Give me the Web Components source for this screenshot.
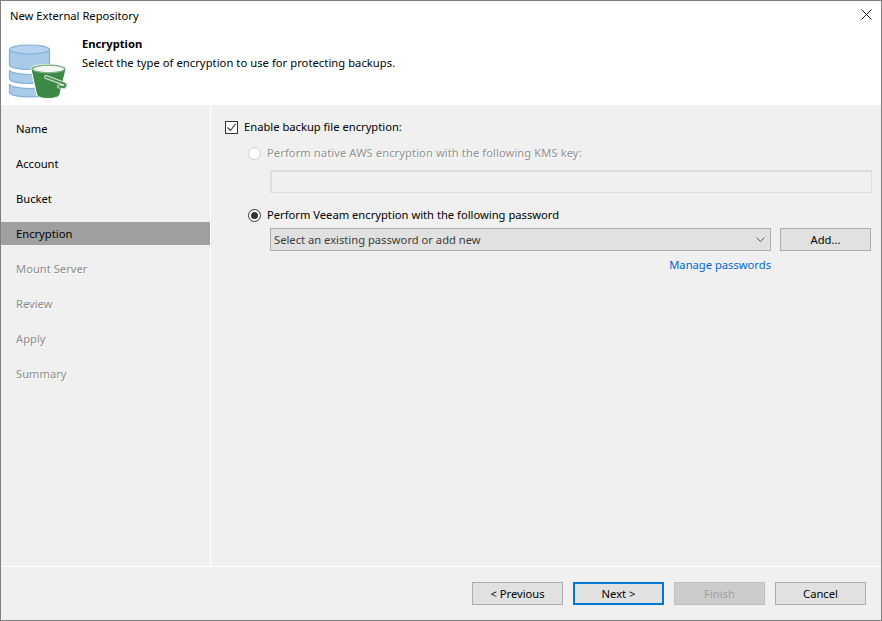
<!DOCTYPE html>
<html>
<head>
<meta charset="utf-8">
<title>New External Repository</title>
<style>
    html, body { margin: 0; padding: 0; }
    body { font: 11.2px "Noto Sans", "Open Sans", sans-serif; color: #000; }
</style>
</head>
<body>
<wizard-dialog>
    <span slot="title">New External Repository</span>
    <span slot="heading">Encryption</span>
    <span slot="subheading">Select the type of encryption to use for protecting backups.</span>

    <wizard-step slot="nav">Name</wizard-step>
    <wizard-step slot="nav">Account</wizard-step>
    <wizard-step slot="nav">Bucket</wizard-step>
    <wizard-step slot="nav" selected>Encryption</wizard-step>
    <wizard-step slot="nav" disabled>Mount Server</wizard-step>
    <wizard-step slot="nav" disabled>Review</wizard-step>
    <wizard-step slot="nav" disabled>Apply</wizard-step>
    <wizard-step slot="nav" disabled>Summary</wizard-step>

    <encryption-form></encryption-form>

    <wizard-button slot="footer">&lt; Previous</wizard-button>
    <wizard-button slot="footer" focused>Next &gt;</wizard-button>
    <wizard-button slot="footer" disabled>Finish</wizard-button>
    <wizard-button slot="footer">Cancel</wizard-button>
</wizard-dialog>

<script>
class WizardDialog extends HTMLElement {
    connectedCallback() {
        this.attachShadow({ mode: 'open' });
        this.shadowRoot.innerHTML = `
            <style>
                :host {
                    display: grid;
                    grid-template-rows: 104px 1fr 53px;
                    box-sizing: border-box;
                    width: 882px;
                    height: 621px;
                    border: 1px solid #7f7f7f;
                    background: #f0f0f0;
                }
                .top {
                    background: #fff;
                    display: grid;
                    grid-template-columns: 81px 1fr;
                    grid-template-rows: 35px 1fr;
                }
                .title {
                    grid-column: 1 / 3;
                    display: flex;
                    justify-content: space-between;
                    padding: 7px 9px 0 9px;
                    line-height: 16px;
                }
                .close { width: 11px; height: 11px; margin-top: 1px; }
                .icon { width: 62px; height: 56px; margin: 8px 0 0 7px; }
                .heading { font-weight: 700; line-height: 16px; }
                .sub { line-height: 16px; margin-top: 3px; letter-spacing: .05px; }
                .middle {
                    display: grid;
                    grid-template-columns: 210px 1fr;
                    border-bottom: 1px solid #fff;
                }
                nav {
                    display: flex;
                    flex-direction: column;
                    gap: 12px;
                    padding-top: 12px;
                    border-right: 1px solid #fff;
                }
                .footer {
                    display: flex;
                    justify-content: flex-end;
                    gap: 10px;
                    padding: 15px 15px 0 0;
                }
            </style>
            <div class="top">
                <div class="title">
                    <slot name="title"></slot>
                    <svg class="close" viewBox="0 0 11 11"><path d="M.5.5l10 10M10.5.5l-10 10" stroke="#1a1a1a" fill="none"/></svg>
                </div>
                <svg class="icon" viewBox="0 0 62 56">
                    <g stroke="#7fb0d8" stroke-width="1.200">
                        <path d="M1.500 40v8.500c0 2.500 9 4.500 20 4.500s20-2 20-4.500V40c0 2.500-9 4.500-20 4.500S1.500 42.500 1.500 40z" fill="#a9cbe9"/>
                        <path d="M1.500 26v9c0 2.500 9 4.500 20 4.500s20-2 20-4.500v-9c0 2.500-9 4.500-20 4.500S1.500 28.500 1.500 26z" fill="#a9cbe9"/>
                        <path d="M1.500 6v15c0 2.500 9 4.500 20 4.500s20-2 20-4.500V6z" fill="#a9cbe9"/>
                        <ellipse cx="21.500" cy="5.500" rx="20" ry="4.500" fill="#b5d3ee"/>
                    </g>
                    <path d="M23 25c0-3 7-4.500 17-4.500S58 22 58 25l-6 25c-.5 3-5 4.500-12 4.500S29 53 28.500 50z" fill="#3c8a45" stroke="#fff" stroke-width="1"/>
                    <ellipse cx="40.500" cy="25" rx="16" ry="3.800" fill="#f4f8f2" stroke="#7fb283" stroke-width="1.200"/>
                    <path d="M38 33l18 6.500c2.500 1 1.500 4-1 3.500l-4-.5" fill="none" stroke="#cfe2d0" stroke-width="4" stroke-linecap="round"/>
                    <path d="M38 33l18 6.500c2.500 1 1.500 4-1 3.500l-4-.5" fill="none" stroke="#3c8a45" stroke-width="1.800" stroke-linecap="round"/>
                </svg>
                <div>
                    <div class="heading"><slot name="heading"></slot></div>
                    <div class="sub"><slot name="subheading"></slot></div>
                </div>
            </div>
            <div class="middle">
                <nav><slot name="nav"></slot></nav>
                <div><slot></slot></div>
            </div>
            <div class="footer"><slot name="footer"></slot></div>
        `;
    }
}

class WizardStep extends HTMLElement {
    connectedCallback() {
        this.attachShadow({ mode: 'open' });
        this.shadowRoot.innerHTML = `
            <style>
                :host {
                    display: block;
                    height: 23px;
                    line-height: 23px;
                    padding-left: 15px;
                }
                :host([selected]) { background: #a0a0a0; }
                :host([disabled]) { color: #8c8c8c; text-shadow: 1px 1px 0 #fff; }
            </style>
            <slot></slot>
        `;
    }
}

class WizardButton extends HTMLElement {
    connectedCallback() {
        this.attachShadow({ mode: 'open' });
        this.shadowRoot.innerHTML = `
            <style>
                :host {
                    display: flex;
                    align-items: center;
                    justify-content: center;
                    box-sizing: border-box;
                    width: 91px;
                    height: 23px;
                    border: 1px solid #adadad;
                    background: #e1e1e1;
                }
                :host([focused]) { border: 2px solid #0078d7; }
                :host([disabled]) {
                    background: #cccccc;
                    border-color: #bfbfbf;
                    color: #a0a0a0;
                }
            </style>
            <slot></slot>
        `;
    }
}

class CheckOption extends HTMLElement {
    connectedCallback() {
        this.attachShadow({ mode: 'open' });
        this.shadowRoot.innerHTML = `
            <style>
                :host {
                    display: flex;
                    align-items: center;
                    gap: 6px;
                    height: 16px;
                    line-height: 16px;
                }
                svg { width: 13px; height: 13px; flex: none; }
            </style>
            <svg viewBox="0 0 13 13">
                <rect x=".5" y=".5" width="12" height="12" fill="#fff" stroke="#333"/>
                <path d="M2.500 6.500l3 3 5-6.500" fill="none" stroke="#333" stroke-width="1.100"/>
            </svg>
            <slot></slot>
        `;
    }
}

class RadioOption extends HTMLElement {
    connectedCallback() {
        this.attachShadow({ mode: 'open' });
        this.shadowRoot.innerHTML = `
            <style>
                :host {
                    display: flex;
                    align-items: center;
                    gap: 6px;
                    height: 16px;
                    line-height: 16px;
                }
                :host([disabled]) { color: #929292; letter-spacing: .07px; text-shadow: 1px 1px 0 #fff; }
                svg { width: 13px; height: 13px; flex: none; }
            </style>
            <svg viewBox="0 0 13 13"></svg>
            <slot></slot>
        `;
        const on = this.hasAttribute('checked');
        const ring = this.hasAttribute('disabled') ? '#cfcfcf' : '#333';
        this.shadowRoot.querySelector('svg').innerHTML =
            `<circle cx="6.500" cy="6.500" r="6" fill="#fff" stroke="${ring}"/>` +
            (on ? '<circle cx="6.500" cy="6.500" r="3.500" fill="#333"/>' : '');
    }
}

class ComboBox extends HTMLElement {
    connectedCallback() {
        this.attachShadow({ mode: 'open' });
        this.shadowRoot.innerHTML = `
            <style>
                :host {
                    display: flex;
                    align-items: center;
                    justify-content: space-between;
                    box-sizing: border-box;
                    height: 23px;
                    padding: 0 5px 0 3px;
                    border: 1px solid #adadad;
                    background: #e1e1e1;
                    color: #3c3c3c;
                }
                svg { width: 9px; height: 5px; }
            </style>
            <slot></slot>
            <svg viewBox="0 0 9 5"><path d="M.5.5l4 4 4-4" fill="none" stroke="#555"/></svg>
        `;
    }
}

class EncryptionForm extends HTMLElement {
    connectedCallback() {
        this.attachShadow({ mode: 'open' });
        this.shadowRoot.innerHTML = `
            <style>
                :host {
                    display: block;
                    padding: 14px 10px 0 14px;
                }
                .opts { padding-left: 23px; }
                radio-option[disabled] { margin-top: 10px; }
                .field {
                    box-sizing: border-box;
                    height: 23px;
                    margin: 9px -1px 0 22px;
                    border: 2px solid #dedede;
                    border-width: 2px 1px 1px 2px;
                    background: #f0f0f0;
                }
                radio-option[checked] { margin-top: 14px; }
                .row {
                    display: grid;
                    grid-template-columns: 501px 91px;
                    gap: 9px;
                    margin: 5px 0 0 22px;
                }
                .link {
                    width: 501px;
                    margin: 6px 0 0 22px;
                    line-height: 16px;
                    text-align: right;
                    color: #0066dd;
                }
            </style>
            <check-option>Enable backup file encryption:</check-option>
            <div class="opts">
                <radio-option disabled>Perform native AWS encryption with the following KMS key:</radio-option>
                <div class="field"></div>
                <radio-option checked>Perform Veeam encryption with the following password</radio-option>
                <div class="row">
                    <combo-box>Select an existing password or add new</combo-box>
                    <wizard-button>Add...</wizard-button>
                </div>
                <div class="link">Manage passwords</div>
            </div>
        `;
    }
}

customElements.define('wizard-dialog', WizardDialog);
customElements.define('wizard-step', WizardStep);
customElements.define('wizard-button', WizardButton);
customElements.define('check-option', CheckOption);
customElements.define('radio-option', RadioOption);
customElements.define('combo-box', ComboBox);
customElements.define('encryption-form', EncryptionForm);
</script>
</body>
</html>
